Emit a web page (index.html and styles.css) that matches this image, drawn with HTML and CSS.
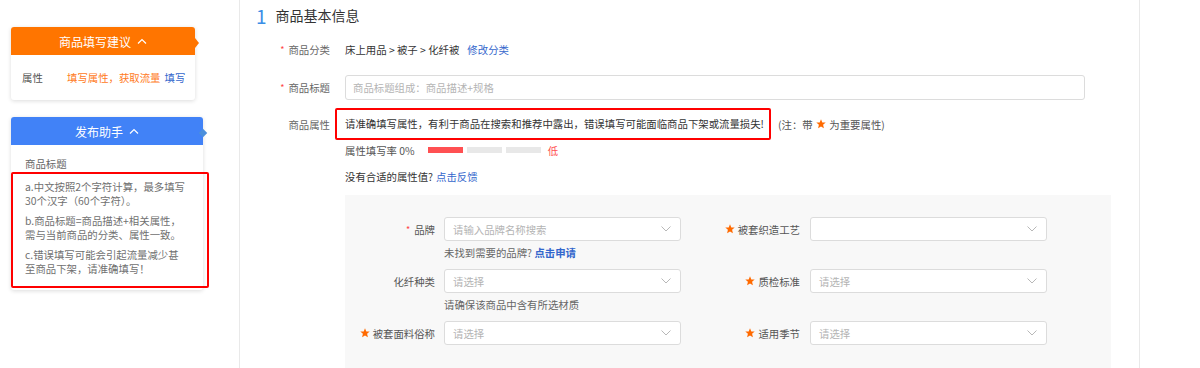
FILE: index.html
```html
<!DOCTYPE html>
<html lang="zh-CN">
<head>
<meta charset="utf-8">
<title>商品基本信息</title>
<link rel="stylesheet" href="styles.css">
</head>
<body>
<div class="page">
  <aside class="sidebar">
    <div class="card card-orange">
      <div class="card-head">商品填写建议 <svg class="up" viewBox="0 0 10 6" width="10" height="6"><polyline points="1,5.5 5,1.5 9,5.5"/></svg></div>
      <div class="card-body attr-body">
        <span class="k">属性</span><span class="orange">填写属性，获取流量</span><a class="link">填写</a>
      </div>
    </div>
    <div class="card card-blue">
      <div class="card-head">发布助手 <svg class="up" viewBox="0 0 10 6" width="10" height="6"><polyline points="1,5.5 5,1.5 9,5.5"/></svg></div>
      <div class="card-body help-body">
        <div class="help-title">商品标题</div>
        <div class="help-box">
          <p>a.中文按照2个字符计算，最多填写<br>30个汉字（60个字符）。</p>
          <p>b.商品标题=商品描述+相关属性，<br>需与当前商品的分类、属性一致。</p>
          <p>c.错误填写可能会引起流量减少甚<br>至商品下架，请准确填写！</p>
        </div>
      </div>
    </div>
  </aside>

  <main class="main">
    <h1 class="title"><span class="num">1</span>商品基本信息</h1>

    <div class="row row-cat">
      <label class="lbl"><i class="req">*</i>商品分类</label>
      <div class="val">床上用品 &gt; 被子 &gt; 化纤被<a class="link edit">修改分类</a></div>
    </div>

    <div class="row row-name">
      <label class="lbl"><i class="req">*</i>商品标题</label>
      <div class="input wide"><span class="ph">商品标题组成：商品描述+规格</span></div>
    </div>

    <div class="row row-attr">
      <label class="lbl lbl-attr">商品属性</label>
      <div class="warn">请准确填写属性，有利于商品在搜索和推荐中露出，错误填写可能面临商品下架或流量损失!</div>
      <span class="note">(注：带 <svg class="star" viewBox="0 0 10 10" width="10" height="10"><polygon points="5,0.3 6.3,3.4 9.7,3.6 7.1,5.8 7.9,9.2 5,7.4 2.1,9.2 2.9,5.8 0.3,3.6 3.7,3.4"/></svg> 为重要属性)</span>
    </div>

    <div class="row row-rate">
      <span class="rate-text">属性填写率 0%</span>
      <div class="bars"><span class="bar on"></span><span class="bar"></span><span class="bar"></span></div>
      <span class="low">低</span>
    </div>

    <div class="row row-fb">
      没有合适的属性值? <a class="link">点击反馈</a>
    </div>

    <section class="panel">
      <div class="cell">
        <div class="field">
          <label class="plbl"><i class="req">*</i>品牌</label>
          <div class="select"><span class="ph">请输入品牌名称搜索</span><svg class="chev" viewBox="0 0 10 6" width="10" height="6"><polyline points="0.5,0.5 5,5 9.5,0.5"/></svg></div>
        </div>
        <div class="hint">未找到需要的品牌? <a class="link strong">点击申请</a></div>
      </div>
      <div class="cell">
        <div class="field">
          <label class="plbl"><svg class="star" viewBox="0 0 10 10" width="10" height="10"><polygon points="5,0.3 6.3,3.4 9.7,3.6 7.1,5.8 7.9,9.2 5,7.4 2.1,9.2 2.9,5.8 0.3,3.6 3.7,3.4"/></svg>被套织造工艺</label>
          <div class="select"><span class="ph"></span><svg class="chev" viewBox="0 0 10 6" width="10" height="6"><polyline points="0.5,0.5 5,5 9.5,0.5"/></svg></div>
        </div>
      </div>
      <div class="cell">
        <div class="field">
          <label class="plbl">化纤种类</label>
          <div class="select"><span class="ph">请选择</span><svg class="chev" viewBox="0 0 10 6" width="10" height="6"><polyline points="0.5,0.5 5,5 9.5,0.5"/></svg></div>
        </div>
        <div class="hint">请确保该商品中含有所选材质</div>
      </div>
      <div class="cell">
        <div class="field">
          <label class="plbl"><svg class="star" viewBox="0 0 10 10" width="10" height="10"><polygon points="5,0.3 6.3,3.4 9.7,3.6 7.1,5.8 7.9,9.2 5,7.4 2.1,9.2 2.9,5.8 0.3,3.6 3.7,3.4"/></svg>质检标准</label>
          <div class="select"><span class="ph">请选择</span><svg class="chev" viewBox="0 0 10 6" width="10" height="6"><polyline points="0.5,0.5 5,5 9.5,0.5"/></svg></div>
        </div>
      </div>
      <div class="cell">
        <div class="field">
          <label class="plbl"><svg class="star" viewBox="0 0 10 10" width="10" height="10"><polygon points="5,0.3 6.3,3.4 9.7,3.6 7.1,5.8 7.9,9.2 5,7.4 2.1,9.2 2.9,5.8 0.3,3.6 3.7,3.4"/></svg>被套面料俗称</label>
          <div class="select"><span class="ph">请选择</span><svg class="chev" viewBox="0 0 10 6" width="10" height="6"><polyline points="0.5,0.5 5,5 9.5,0.5"/></svg></div>
        </div>
      </div>
      <div class="cell">
        <div class="field">
          <label class="plbl"><svg class="star" viewBox="0 0 10 10" width="10" height="10"><polygon points="5,0.3 6.3,3.4 9.7,3.6 7.1,5.8 7.9,9.2 5,7.4 2.1,9.2 2.9,5.8 0.3,3.6 3.7,3.4"/></svg>适用季节</label>
          <div class="select"><span class="ph">请选择</span><svg class="chev" viewBox="0 0 10 6" width="10" height="6"><polyline points="0.5,0.5 5,5 9.5,0.5"/></svg></div>
        </div>
      </div>
    </section>
  </main>
</div>
</body>
</html>
```

FILE: styles.css
```css
* { box-sizing: border-box; }

html, body {
  margin: 0;
  padding: 0;
  background: #fff;
}

body {
  font-family: "Noto Sans CJK SC", "Noto Sans", sans-serif;
  font-size: 10.4px;
  color: #333;
}

.page {
  display: flex;
  height: 368px;
  overflow: hidden;
}

/* ---------- sidebar ---------- */
.sidebar {
  flex: none;
  width: 240px;
  border-right: 1px solid #e9e9e9;
  padding: 27px 0 0 11px;
}

.card {
  position: relative;
  background: #fff;
  border-radius: 3px;
  box-shadow: 0 1px 4px rgba(0, 0, 0, 0.14);
}

.card-orange { width: 184px; }
.card-blue { width: 192px; margin-top: 17px; }

.card-head {
  height: 28px;
  display: flex;
  align-items: center;
  justify-content: center;
  gap: 6px;
  color: #fff;
  font-size: 12px;
  border-radius: 3px 3px 0 0;
}

.card-orange .card-head { background: #ff7500; }
.card-blue .card-head { background: #4182f7; }

.card-head .up {
  fill: none;
  stroke: #fff;
  stroke-width: 1.2;
}

.card-orange::after {
  content: "";
  position: absolute;
  right: -4px;
  top: 11px;
  border-left: 4px solid #ff7500;
  border-top: 5px solid transparent;
  border-bottom: 5px solid transparent;
}

.card-blue::after {
  content: "";
  position: absolute;
  right: -3px;
  top: 13px;
  width: 6px;
  height: 6px;
  background: #4b8fdc;
  transform: rotate(45deg);
}

.attr-body {
  height: 45px;
  display: flex;
  align-items: center;
  padding-left: 11px;
}

.attr-body .k {
  width: 45px;
  color: #555;
}

.orange { color: #ff7a1c; }

.link {
  color: #3366cc;
  text-decoration: none;
}

.attr-body .link { margin-left: 4px; }

.help-body {
  padding: 12px 0 2px 0;
}

.help-title {
  padding-left: 14px;
  line-height: 14px;
  color: #666;
}

.help-box {
  margin-top: 1px;
  width: 198px;
  border: 2px solid #f00;
  border-radius: 2px;
  padding: 6px 12px 10px 12px;
  color: #707070;
  line-height: 14px;
  white-space: nowrap;
}

.help-box p { margin: 0; }
.help-box p + p { margin-top: 6px; }

/* ---------- main ---------- */
.main {
  flex: none;
  width: 900px;
  border-right: 1px solid #e9e9e9;
}

.title {
  margin: 0;
  height: 30px;
  display: flex;
  align-items: center;
  padding-left: 16px;
  font-size: 14px;
  font-weight: normal;
  color: #333;
}

.title .num {
  font-size: 19px;
  color: #3a8ee6;
  margin-right: 9px;
  font-weight: normal;
}

.row {
  display: flex;
  align-items: center;
}

.lbl {
  flex: none;
  width: 90px;
  margin-right: 15px;
  text-align: right;
  color: #666;
}

.req {
  font-style: normal;
  color: #f44;
  font-size: 9px;
  margin-right: 4px;
  vertical-align: 1px;
}

.row-cat {
  margin-top: 7px;
  height: 24px;
}

.row-cat .val { color: #333; }
.row-cat .edit { margin-left: 8px; }

.row-name { margin-top: 14px; }

.input {
  height: 25px;
  border: 1px solid #dcdcdc;
  border-radius: 3px;
  background: #fff;
  display: flex;
  align-items: center;
  padding-left: 7px;
}

.input.wide { width: 740px; }

.ph { color: #b4b4b4; }

.row-attr {
  margin-top: 8px;
  height: 32px;
}

.lbl-attr { margin-right: 5px; }

.warn {
  height: 32px;
  border: 2px solid #f00;
  border-radius: 2px;
  padding: 0 5px 0 8px;
  line-height: 28px;
  color: #333;
  white-space: nowrap;
}

.note {
  margin-left: 7px;
  color: #555;
  display: inline-flex;
  align-items: center;
  white-space: pre;
}

.star {
  fill: #ff6a00;
  flex: none;
}

.note .star { margin: 0 1px; }

.row-rate {
  height: 20px;
  padding-left: 105px;
}

.rate-text { color: #555; }

.bars {
  display: flex;
  gap: 4px;
  margin-left: 13px;
}

.bar {
  width: 35px;
  height: 6px;
  background: #e8e8e8;
}

.bar.on { background: #ff5052; }

.low {
  margin-left: 7px;
  color: #ff5052;
}

.row-fb {
  margin-top: 6px;
  height: 20px;
  padding-left: 105px;
  color: #333;
}

.row-fb .link { margin-left: 3px; }

/* ---------- attribute panel ---------- */
.panel {
  margin: 9px 0 0 105px;
  width: 766px;
  min-height: 200px;
  background: #f8f8f8;
  padding-top: 22px;
  display: grid;
  grid-template-columns: 336px 337px;
  column-gap: 29px;
  align-items: start;
  align-content: start;
}

.field {
  display: flex;
  align-items: center;
}

.plbl {
  flex: none;
  width: 90px;
  margin-right: 9px;
  display: flex;
  align-items: center;
  justify-content: flex-end;
  color: #555;
}

.cell:nth-child(2n) .plbl { margin-right: 10px; }

.plbl .star { margin-right: 3px; }

.select {
  width: 237px;
  height: 24px;
  border: 1px solid #dcdcdc;
  border-radius: 3px;
  background: #fff;
  display: flex;
  align-items: center;
  justify-content: space-between;
  padding: 0 9px 0 8px;
}

.chev {
  fill: none;
  stroke: #b8b8b8;
  stroke-width: 1;
}

.hint {
  padding-left: 99px;
  height: 28px;
  line-height: 24px;
  color: #666;
}

.hint .strong { font-weight: bold; }
```
